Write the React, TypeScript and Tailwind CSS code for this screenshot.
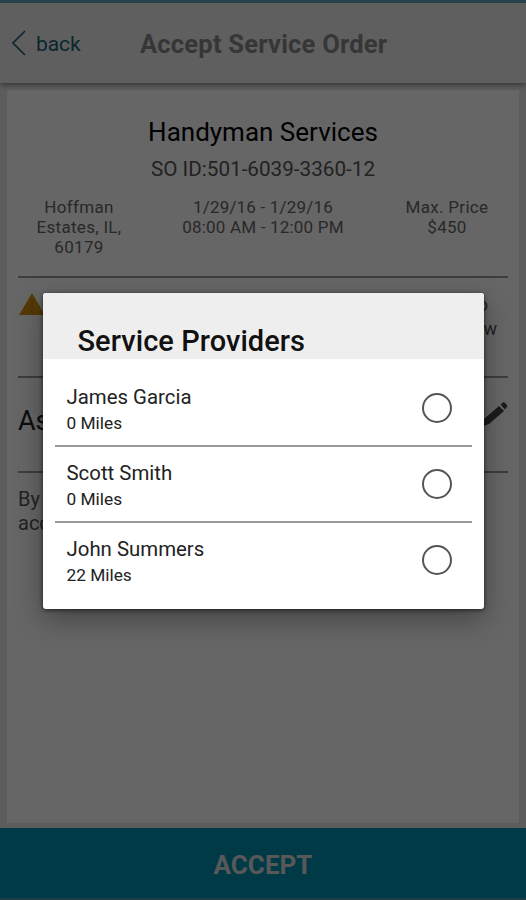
const providers = [
  { name: "James Garcia", distance: "0 Miles" },
  { name: "Scott Smith", distance: "0 Miles" },
  { name: "John Summers", distance: "22 Miles" },
];

function BackIcon() {
  return (
    <svg viewBox="0 0 14 26" className="h-[26px] w-[14px]" fill="none" stroke="currentColor" strokeWidth="1.6">
      <path d="M13 1 1 13l12 12" />
    </svg>
  );
}

function WarningIcon() {
  return (
    <svg viewBox="0 0 26 22" className="ml-px h-[22px] w-[26px] shrink-0">
      <path d="M13 0 26 22H0Z" fill="#d3920f" />
      <path d="M13 7v8M13 17.5v2" stroke="#bf8310" strokeWidth="1.5" />
    </svg>
  );
}

function PencilIcon() {
  return (
    <svg viewBox="0 0 30 26" className="h-[26px] w-[30px] shrink-0">
      <path d="m3 26 3-8L21 5l5 5-15 13Z" fill="#444" />
      <path d="m22.5 3.5 3-2.5q2 .5 4 4l-2.5 3.5Z" fill="#444" />
    </svg>
  );
}

function Header() {
  return (
    <header className="relative z-10 flex h-[83px] shrink-0 items-center border-t-[3px] border-[#5ba5b9] bg-[#eeeeee] pt-[3px] shadow-[0_2px_5px_rgba(0,0,0,0.4)]">
      <div className="flex w-[140px] items-center text-[#1b6075]">
        <div className="mb-1 ml-3">
          <BackIcon />
        </div>
        <span className="ml-[10px] text-[21px] tracking-[-0.1px]">back</span>
      </div>
      <h1 className="text-[25.5px] font-bold tracking-[0.22px] text-[#888]">Accept Service Order</h1>
    </header>
  );
}

function OrderCard() {
  return (
    <main className="mx-[7px] mt-[7px] h-[733px] shrink-0 bg-white px-[11px] pt-[27px]">
      <h2 className="text-center text-[26px] leading-[30px] text-black">Handyman Services</h2>
      <p className="mt-[10px] text-center text-[20.7px] leading-6 text-[#555]">SO ID:501-6039-3360-12</p>
      <div className="mt-4 flex h-[81px] justify-between border-b-2 border-[#999] text-center text-[17px] leading-5 text-[#666]">
        <p className="w-[122px] px-3 tracking-[0.3px]">Hoffman Estates, IL, 60179</p>
        <p className="w-[180px] tracking-[0.2px]">
          1/29/16 - 1/29/16
          <br />
          08:00 AM - 12:00 PM
        </p>
        <p className="w-[122px] tracking-[0.3px]">
          Max. Price
          <br />
          $450
        </p>
      </div>
      <div className="flex h-[100px] justify-between border-b-2 border-[#999] pt-[15px]">
        <WarningIcon />
        <p className="mr-[11px] text-right text-[18px] leading-6 text-[#555]">
          <span className="mr-[9px]">o</span>
          <br />
          w
        </p>
      </div>
      <div className="flex h-[95px] items-center justify-between border-b-2 border-[#999] pb-1.5">
        <span className="text-[27px] text-[#222]">As</span>
        <div className="pb-4">
          <PencilIcon />
        </div>
      </div>
      <p className="mt-[14px] text-[20px] leading-6 text-[#555]">
        By
        <br />
        acc
      </p>
    </main>
  );
}

function ProvidersDialog() {
  return (
    <section className="mt-[293px] h-[316px] w-[441px] overflow-hidden rounded-[3px] bg-white shadow-[0_10px_28px_rgba(0,0,0,0.35),0_1px_4px_rgba(0,0,0,0.6)]">
      <h2 className="flex h-[66px] items-end bg-[#eeeeee] pb-[2px] pl-[35px] text-[29px] leading-8 text-[#111]">
        <span className="font-medium tracking-[0.05px]">Service Providers</span>
      </h2>
      <ul className="px-3 pt-3">
        {providers.map((provider) => (
          <li
            key={provider.name}
            className="flex h-[76px] items-center justify-between border-b-2 border-[#999] pr-5 pl-3 last:border-transparent"
          >
            <div className="pt-[3px]">
              <p className="text-[20.4px] leading-[26px] text-[#222]">{provider.name}</p>
              <p className="pt-px text-[17.3px] leading-[25px] text-[#222]">{provider.distance}</p>
            </div>
            <span className="size-[30px] rounded-full border-[2.5px] border-[#555]" />
          </li>
        ))}
      </ul>
    </section>
  );
}

export default function App() {
  return (
    <div className="relative flex h-[900px] w-[526px] flex-col overflow-hidden bg-[#e6e6e6] font-['Roboto',sans-serif]">
      <Header />
      <OrderCard />
      <button className="mt-auto flex h-[72px] shrink-0 items-center justify-center border-b-2 border-[#509bad] bg-[#0092b0] pt-1 text-[26px] font-bold text-[#ddd]">
        ACCEPT
      </button>
      <div className="absolute inset-0 z-20 flex items-start justify-center bg-black/60">
        <ProvidersDialog />
      </div>
    </div>
  );
}
